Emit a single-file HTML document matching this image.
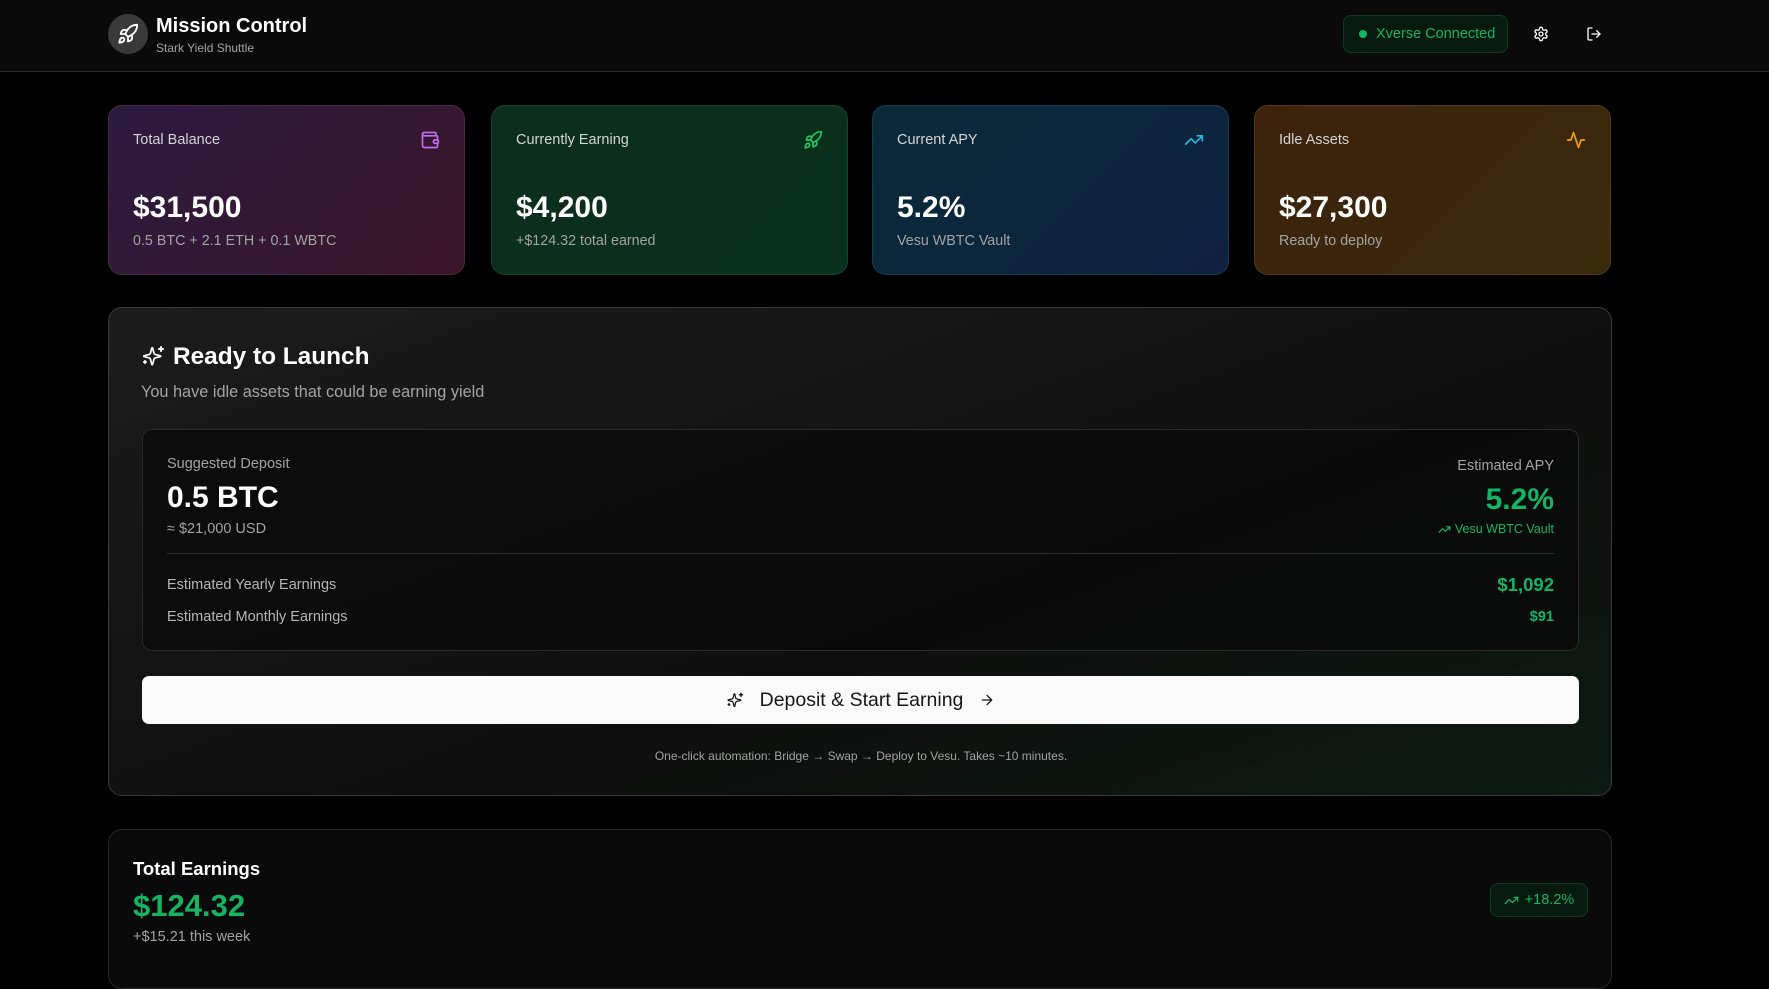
<!DOCTYPE html>
<html><head><meta charset="utf-8"><style>
*{box-sizing:border-box;margin:0;padding:0}
body{width:1769px;height:963px;overflow:hidden;background:#000;font-family:"Liberation Sans",sans-serif;color:#fff;position:relative}
.abs{position:absolute}
.hdr{left:0;top:0;width:1769px;height:72px;background:#0a0a0a;border-bottom:1px solid #262626}
.card{top:105px;width:357px;height:170px;border-radius:14px;border:1px solid}
.card .l{position:absolute;left:24px;top:26px;font-size:14.5px;color:#d4d4d4}
.card .v{position:absolute;left:24px;top:85px;font-size:30px;font-weight:bold}
.card .s{position:absolute;left:24px;top:127px;font-size:14.3px;color:#a3a3a3}
.card svg{position:absolute;right:24px;top:24px}
.g{color:#14b463}
</style></head><body>
<div class="abs hdr">
 <div class="abs" style="left:108px;top:14px;width:40px;height:40px;border-radius:50%;background:#3a3a3a"></div>
 <svg class="abs" style="left:117px;top:23px" width="22" height="22" viewBox="0 0 24 24" fill="none" stroke="#fff" stroke-width="2" stroke-linecap="round" stroke-linejoin="round"><path d="M4.5 16.5c-1.5 1.26-2 5-2 5s3.74-.5 5-2c.71-.84.7-2.130-.09-2.91a2.18 2.18 0 0 0-2.91-.09z"/><path d="m12 15-3-3a22 22 0 0 1 2-3.95A12.88 12.88 0 0 1 22 2c0 2.72-.78 7.5-6 11a22.35 22.35 0 0 1-4 2z"/><path d="M9 12H4s.55-3.03 2-4c1.62-1.08 5 0 5 0"/><path d="M12 15v5s3.03-.55 4-2c1.08-1.62 0-5 0-5"/></svg>
 <div class="abs" style="left:156px;top:15px;font-size:20px;font-weight:bold">Mission Control</div>
 <div class="abs" style="left:156px;top:41px;font-size:12px;color:#a3a3a3">Stark Yield Shuttle</div>
 <div class="abs" style="left:1343px;top:15px;width:165px;height:38px;border-radius:8px;background:#071a10;border:1px solid #0f3a22"></div>
 <div class="abs" style="left:1359px;top:30px;width:8px;height:8px;border-radius:50%;background:#14b463"></div>
 <div class="abs g" style="left:1376px;top:26px;font-size:14.5px">Xverse Connected</div>
 <svg class="abs" style="left:1533px;top:26px" width="16" height="16" viewBox="0 0 24 24" fill="none" stroke="#fff" stroke-width="2" stroke-linecap="round" stroke-linejoin="round"><path d="M12.22 2h-.44a2 2 0 0 0-2 2v.18a2 2 0 0 1-1 1.730l-.43.25a2 2 0 0 1-2 0l-.15-.08a2 2 0 0 0-2.73.73l-.22.38a2 2 0 0 0 .73 2.73l.15.1a2 2 0 0 1 1 1.72v.51a2 2 0 0 1-1 1.74l-.15.09a2 2 0 0 0-.73 2.73l.22.38a2 2 0 0 0 2.73.73l.15-.08a2 2 0 0 1 2 0l.43.25a2 2 0 0 1 1 1.73V20a2 2 0 0 0 2 2h.44a2 2 0 0 0 2-2v-.18a2 2 0 0 1 1-1.73l.43-.25a2 2 0 0 1 2 0l.15.08a2 2 0 0 0 2.73-.73l.22-.39a2 2 0 0 0-.73-2.73l-.15-.08a2 2 0 0 1-1-1.74v-.5a2 2 0 0 1 1-1.74l.15-.09a2 2 0 0 0 .73-2.730l-.22-.38a2 2 0 0 0-2.73-.73l-.15.08a2 2 0 0 1-2 0l-.43-.25a2 2 0 0 1-1-1.73V4a2 2 0 0 0-2-2z"/><circle cx="12" cy="12" r="3"/></svg>
 <svg class="abs" style="left:1586px;top:26px" width="16" height="16" viewBox="0 0 24 24" fill="none" stroke="#fff" stroke-width="2" stroke-linecap="round" stroke-linejoin="round"><path d="M9 21H5a2 2 0 0 1-2-2V5a2 2 0 0 1 2-2h4"/><polyline points="16 17 21 12 16 7"/><line x1="21" y1="12" x2="9" y2="12"/></svg>
</div>

<div class="abs card" style="left:108px;background:linear-gradient(135deg,#2c1a40,#3a1628);border-color:#4a2a4a">
 <div class="l">Total Balance</div>
 <svg width="20" height="20" viewBox="0 0 24 24" fill="none" stroke="#c06cf0" stroke-width="2" stroke-linecap="round" stroke-linejoin="round"><path d="M19 7V4a1 1 0 0 0-1-1H5a2 2 0 0 0 0 4h15a1 1 0 0 1 1 1v4h-3a2 2 0 0 0 0 4h3a1 1 0 0 0 1-1v-2a1 1 0 0 0-1-1"/><path d="M3 5v14a2 2 0 0 0 2 2h15a1 1 0 0 0 1-1v-4"/></svg>
 <div class="v">$31,500</div><div class="s">0.5 BTC + 2.1 ETH + 0.1 WBTC</div>
</div>
<div class="abs card" style="left:491px;background:linear-gradient(135deg,#0d2e1c,#08301c);border-color:#14442a">
 <div class="l">Currently Earning</div>
 <svg width="20" height="20" viewBox="0 0 24 24" fill="none" stroke="#22c55e" stroke-width="2" stroke-linecap="round" stroke-linejoin="round"><path d="M4.5 16.5c-1.5 1.26-2 5-2 5s3.74-.5 5-2c.71-.84.7-2.13-.09-2.91a2.18 2.18 0 0 0-2.91-.09z"/><path d="m12 15-3-3a22 22 0 0 1 2-3.95A12.88 12.88 0 0 1 22 2c0 2.72-.78 7.5-6 11a22.35 22.35 0 0 1-4 2z"/><path d="M9 12H4s.55-3.03 2-4c1.62-1.08 5 0 5 0"/><path d="M12 15v5s3.03-.55 4-2c1.08-1.62 0-5 0-5"/></svg>
 <div class="v">$4,200</div><div class="s">+$124.32 total earned</div>
</div>
<div class="abs card" style="left:872px;background:linear-gradient(135deg,#0a2a38,#0e2240);border-color:#173a52">
 <div class="l">Current APY</div>
 <svg width="20" height="20" viewBox="0 0 24 24" fill="none" stroke="#22b8e8" stroke-width="2" stroke-linecap="round" stroke-linejoin="round"><polyline points="22 7 13.5 15.5 8.5 10.5 2 17"/><polyline points="16 7 22 7 22 13"/></svg>
 <div class="v">5.2%</div><div class="s">Vesu WBTC Vault</div>
</div>
<div class="abs card" style="left:1254px;background:linear-gradient(135deg,#3c220c,#3a2a0c);border-color:#553a18">
 <div class="l">Idle Assets</div>
 <svg width="20" height="20" viewBox="0 0 24 24" fill="none" stroke="#f59e0b" stroke-width="2" stroke-linecap="round" stroke-linejoin="round"><path d="M22 12h-4l-3 9L9 3l-3 9H2"/></svg>
 <div class="v">$27,300</div><div class="s">Ready to deploy</div>
</div>

<div class="abs" style="left:108px;top:307px;width:1504px;height:489px;border-radius:14px;border:1px solid #3a3a3a;background:linear-gradient(160deg,#1c1c1c,#0e0e0e 60%,#0c1a12)">
 <svg class="abs" style="left:32px;top:36px" width="24" height="24" viewBox="0 0 24 24" fill="none" stroke="#fff" stroke-width="2" stroke-linecap="round" stroke-linejoin="round"><path d="M9.94 15.5A2 2 0 0 0 8.5 14.06l-6.13-1.58a.5.5 0 0 1 0-.96L8.5 9.94A2 2 0 0 0 9.94 8.5l1.58-6.14a.5.5 0 0 1 .96 0L14.06 8.5A2 2 0 0 0 15.5 9.94l6.13 1.58a.5.5 0 0 1 0 .96L15.5 14.06a2 2 0 0 0-1.44 1.44l-1.58 6.13a.5.5 0 0 1-.96 0z" transform="translate(1 2) scale(.85)"/><path d="M20 3v4M22 5h-4M4 17v2M5 18H3"/></svg>
 <div class="abs" style="left:64px;top:35px;font-size:24.4px;font-weight:bold">Ready to Launch</div>
 <div class="abs" style="left:32px;top:75px;font-size:16.3px;color:#a3a3a3">You have idle assets that could be earning yield</div>
 <div class="abs" style="left:33px;top:121px;width:1437px;height:222px;border-radius:10px;border:1px solid #2a2a2a;background:rgba(10,10,10,.8)">
  <div class="abs" style="left:24px;top:26px;font-size:14.5px;color:#a3a3a3">Suggested Deposit</div>
  <div class="abs" style="left:24px;top:51px;font-size:30px;font-weight:bold">0.5 BTC</div>
  <div class="abs" style="left:24px;top:91px;font-size:14.5px;color:#a3a3a3">≈ $21,000 USD</div>
  <div class="abs" style="right:24px;top:28px;font-size:14.5px;color:#a3a3a3">Estimated APY</div>
  <div class="abs g" style="right:24px;top:53px;font-size:30px;font-weight:bold">5.2%</div>
  <div class="abs g" style="right:24px;top:92px;font-size:12.5px;display:flex;align-items:center;gap:4px"><svg width="13" height="13" viewBox="0 0 24 24" fill="none" stroke="#14b463" stroke-width="2.2" stroke-linecap="round" stroke-linejoin="round"><polyline points="22 7 13.5 15.5 8.5 10.5 2 17"/><polyline points="16 7 22 7 22 13"/></svg>Vesu WBTC Vault</div>
  <div class="abs" style="left:24px;right:24px;top:123px;height:1px;background:#2e2e2e"></div>
  <div class="abs" style="left:24px;top:147px;font-size:14.5px;color:#b5b5b5">Estimated Yearly Earnings</div>
  <div class="abs g" style="right:24px;top:144px;font-size:18.5px;font-weight:bold">$1,092</div>
  <div class="abs" style="left:24px;top:179px;font-size:14.5px;color:#b5b5b5">Estimated Monthly Earnings</div>
  <div class="abs g" style="right:24px;top:179px;font-size:14.5px;font-weight:bold">$91</div>
 </div>
 <div class="abs" style="left:33px;top:368px;width:1437px;height:48px;border-radius:7px;background:#fafafa;color:#171717;display:flex;align-items:center;justify-content:center;font-size:19.5px">
  <svg width="18" height="18" viewBox="0 0 24 24" fill="none" stroke="#171717" stroke-width="2" stroke-linecap="round" stroke-linejoin="round" style="margin-right:16px"><path d="M9.94 15.5A2 2 0 0 0 8.5 14.06l-6.13-1.58a.5.5 0 0 1 0-.96L8.5 9.94A2 2 0 0 0 9.94 8.5l1.58-6.14a.5.5 0 0 1 .96 0L14.06 8.5A2 2 0 0 0 15.5 9.94l6.13 1.58a.5.5 0 0 1 0 .96L15.5 14.06a2 2 0 0 0-1.44 1.44l-1.58 6.13a.5.5 0 0 1-.96 0z" transform="translate(1 2) scale(.85)"/><path d="M20 3v4M22 5h-4M4 17v2M5 18H3"/></svg>Deposit &amp; Start Earning<svg width="16" height="16" viewBox="0 0 24 24" fill="none" stroke="#171717" stroke-width="2" stroke-linecap="round" stroke-linejoin="round" style="margin-left:16px"><path d="M5 12h14M12 5l7 7-7 7"/></svg>
 </div>
 <div class="abs" style="left:0;width:1504px;top:441px;text-align:center;font-size:12px;color:#a3a3a3">One-click automation: Bridge → Swap → Deploy to Vesu. Takes ~10 minutes.</div>
</div>

<div class="abs" style="left:108px;top:829px;width:1504px;height:160px;border-radius:14px;border:1px solid #2a2a2a;background:#0a0a0a">
 <div class="abs" style="left:24px;top:28px;font-size:18.5px;font-weight:bold">Total Earnings</div>
 <div class="abs g" style="left:24px;top:58px;font-size:31px;font-weight:bold">$124.32</div>
 <div class="abs" style="left:24px;top:99px;font-size:14.5px;color:#a3a3a3">+$15.21 this week</div>
 <div class="abs g" style="left:1381px;top:53px;width:98px;height:34px;border-radius:8px;background:#071a10;border:1px solid #0f3a22;font-size:14.5px;display:flex;align-items:center;justify-content:center;gap:6px"><svg width="15" height="15" viewBox="0 0 24 24" fill="none" stroke="#14b463" stroke-width="2" stroke-linecap="round" stroke-linejoin="round"><polyline points="22 7 13.5 15.5 8.5 10.5 2 17"/><polyline points="16 7 22 7 22 13"/></svg>+18.2%</div>
</div>
</body></html>
